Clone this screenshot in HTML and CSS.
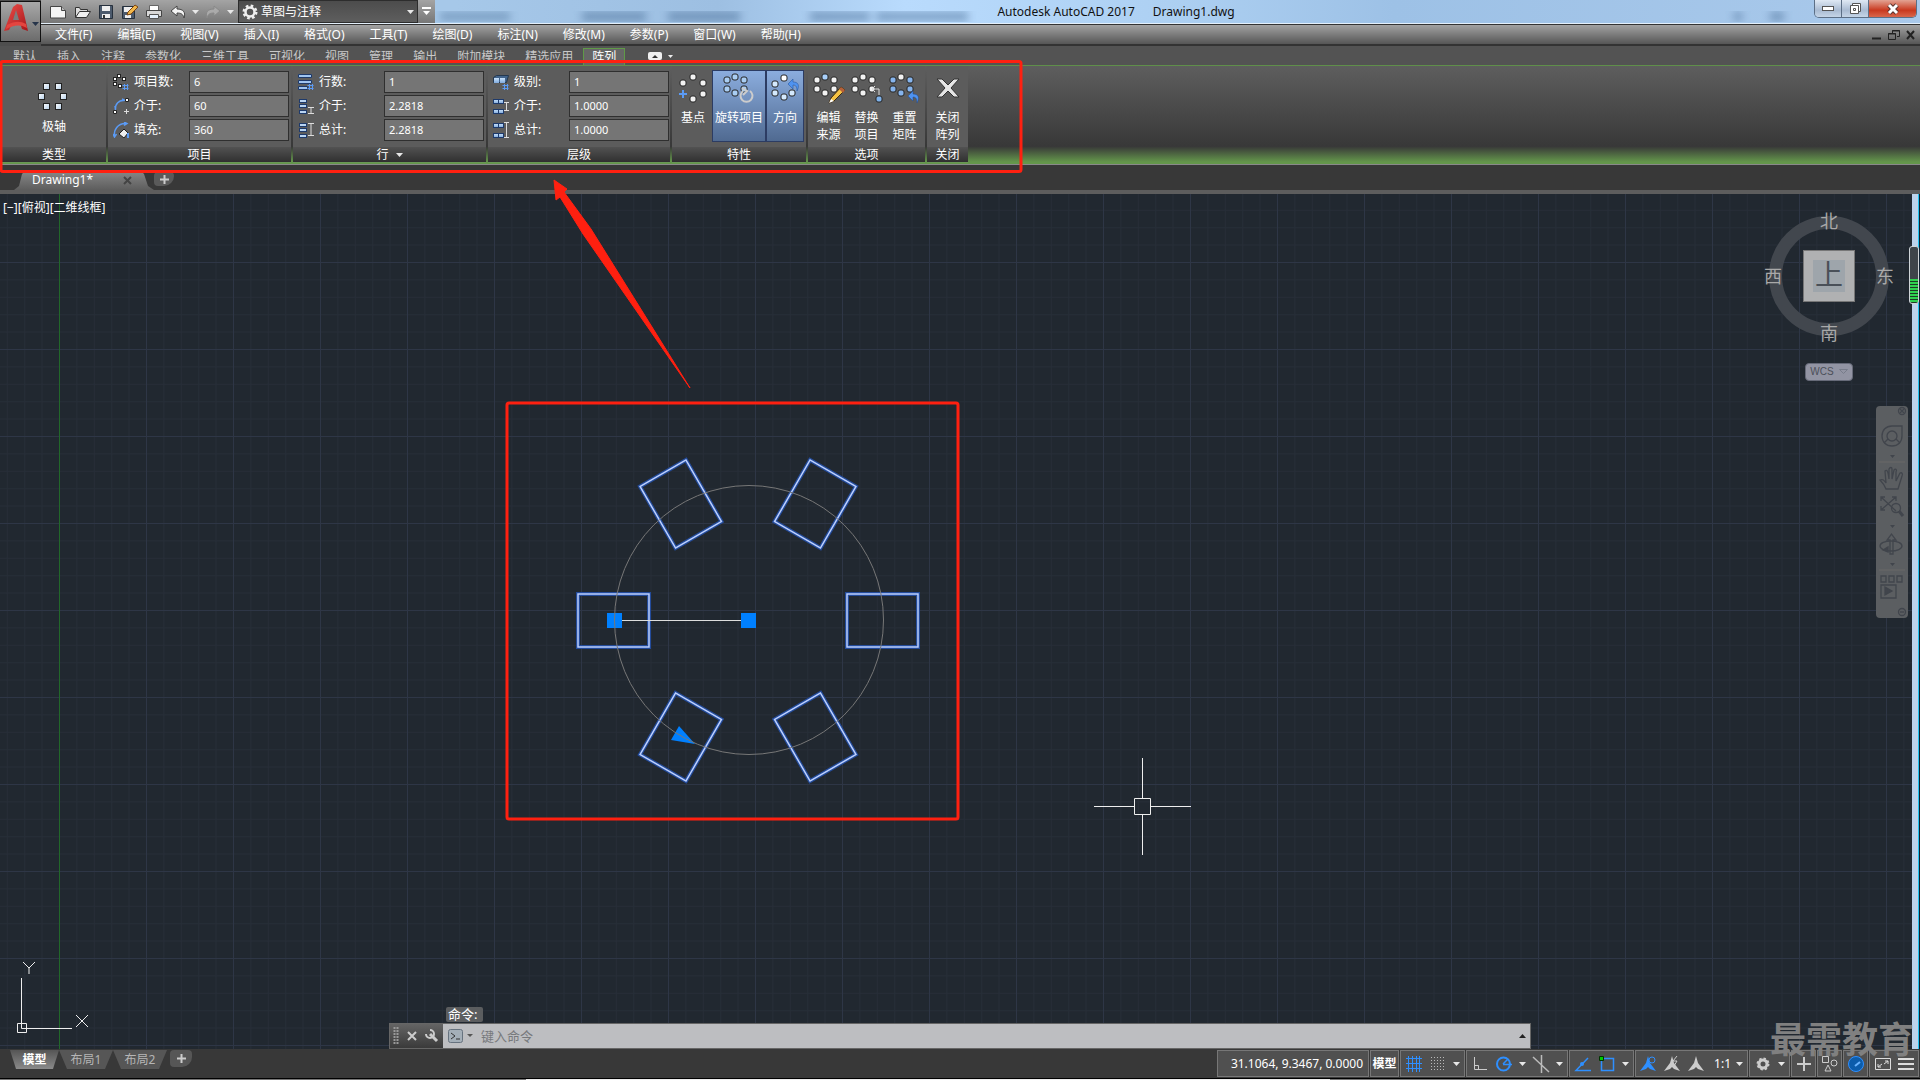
FILE: index.html
```html
<!DOCTYPE html>
<html lang="zh-CN">
<head>
    <meta charset="UTF-8">
    <meta name="viewport" content="width=device-width, initial-scale=1.0">
    <title>Autodesk AutoCAD 2017 - Drawing1.dwg</title>
    <link rel="stylesheet" href="styles.css">
</head>
<body>
    <!-- общие значки -->
    <svg class="defs" width="0" height="0" aria-hidden="true">
        <defs>
            <linearGradient id="tile" x1="0" y1="0" x2="1" y2="1">
                <stop offset="0" stop-color="#fff"/><stop offset="1" stop-color="#b4cfea"/>
            </linearGradient>
            <linearGradient id="blueTile" x1="0" y1="0" x2="0" y2="1">
                <stop offset="0" stop-color="#c9e2fb"/><stop offset="1" stop-color="#7fa9dc"/>
            </linearGradient>
            <linearGradient id="logoRed" x1="0" y1="0" x2="1" y2="1">
                <stop offset="0" stop-color="#f0504a"/><stop offset="1" stop-color="#a3151a"/>
            </linearGradient>
            <rect id="dot" x="-3" y="-3" width="6" height="6" rx="2" stroke="#262626"/>
            <g id="ring">
                <use href="#dot" x="4" y="8"/><use href="#dot" x="21" y="8"/>
                <use href="#dot" x="21" y="17"/><use href="#dot" x="12" y="21"/><use href="#dot" x="4" y="17"/>
            </g>
            <path id="hash" d="M11.500 10v6M14.500 10v6M9.500 11.500h6M9.500 14.500h6" stroke="#5b9bf5" fill="none"/>
            <g id="bars" fill="#b9d4f2" stroke="#1e3a6b">
                <rect x="1.500" y="1.500" width="7" height="3"/><rect x="1.500" y="6.500" width="7" height="3"/><rect x="1.500" y="12.500" width="7" height="3"/>
            </g>
            <g id="pairs" fill="url(#blueTile)" stroke="#1e3a6b">
                <rect x=".5" y="1.500" width="5" height="4"/><rect x="5.500" y="1.500" width="5" height="4"/>
                <rect x=".5" y="11.500" width="5" height="4"/><rect x="5.500" y="11.500" width="5" height="4"/>
            </g>
            <path id="undoBlue" d="M0 5l5-5v3c5 0 7 3 4 9 0-4-1-6-4-6v4z" fill="#4f93f0" stroke="#1f4d94" stroke-width=".5"/>
            <path id="down" d="M0 0h7l-3.500 4z" fill="#e8e8e8"/>
            <path id="man" d="M8 0l2 7 6 8-6-2-2-2-2 2-6 2 6-8z"/>
        </defs>
    </svg>

    <header class="top">
        <button class="app-btn" aria-label="应用程序菜单">
            <svg width="36" height="36" viewBox="0 0 36 36">
                <path d="M1 27L10 3l4-3 5 1 6 26-6-2-2-6-8 1-3 6z" fill="url(#logoRed)"/>
                <path d="M10 16l3-10 3 10z" fill="#7d7d7d"/>
                <path d="M4 21c8-4 13-4 19-1l1 4c-7-4-13-3-21 1z" fill="#e4453f"/>
                <path d="M29 18h7l-3.500 4z" fill="#26344a"/>
            </svg>
        </button>
        <div class="top-rows">
            <div class="title-bar">
                <svg class="aero" width="100%" height="24" aria-hidden="true">
                    <filter id="soft"><feGaussianBlur stdDeviation="4"/></filter>
                    <g fill="#41658e" opacity=".5" filter="url(#soft)">
                        <rect x="440" y="13" width="70" height="7"/><rect x="582" y="12" width="64" height="9"/><rect x="668" y="12" width="72" height="9"/>
                        <rect x="810" y="12" width="60" height="9"/><rect x="876" y="12" width="92" height="9"/>
                        <rect x="1734" y="12" width="8" height="9"/><rect x="1770" y="12" width="14" height="9"/>
                    </g>
                </svg>
                <div class="qat">
                    <button aria-label="新建"><svg width="18" height="16"><path d="M1.500 2.500h11l4 4v7.500h-15z" fill="#f4f4f4" stroke="#444"/><path d="M12.500 2.500v4h4" fill="#bbb" stroke="#444"/></svg></button>
                    <button aria-label="打开"><svg width="18" height="16"><path d="M2.500 13.500v-10h4l1 2h7v3" fill="#ddd" stroke="#333"/><path d="M2.500 13.500l4-6h11l-4 6z" fill="#f0f0f0" stroke="#333"/></svg></button>
                    <button aria-label="保存"><svg width="18" height="16"><path d="M2.500 1.500h13v13h-13z" fill="#4c5a6c" stroke="#26303c"/><path d="M5 2h8v5H5zM5 10h8v4H5z" fill="#eee"/><path d="M6 11h2v3H6z" fill="#333"/></svg></button>
                    <button aria-label="另存为"><svg width="18" height="16"><path d="M1.500 2.500h12v12h-12z" fill="#4c5a6c" stroke="#26303c"/><path d="M3 3h9v5H3zM4 11h6v3H4z" fill="#eee"/><path d="M6 11l1-3 7-7 3 2-7 7z" fill="#f2b84b" stroke="#7c4411"/></svg></button>
                    <button aria-label="打印"><svg width="18" height="16"><path d="M4.500 1.500h9v5h-9z" fill="#fff" stroke="#666"/><path d="M1.500 6.500h15v6h-15z" fill="#d8d8d8" stroke="#444"/><path d="M4.500 10.500h9v4h-9z" fill="#e6f0fb" stroke="#555"/></svg></button>
                    <button aria-label="放弃"><svg width="18" height="16"><path d="M2 7l6-5v3c6 0 9 3 7 9-1-4-3-5-7-5v3z" fill="#f4f4f4" stroke="#444"/></svg></button>
                    <button class="tiny" aria-label="放弃列表"><svg width="7" height="4"><use href="#down"/></svg></button>
                    <button aria-label="重做"><svg width="18" height="16"><path d="M16 7l-6-5v3c-6 0-9 3-7 9 1-4 3-5 7-5v3z" fill="#aaa" stroke="#888"/></svg></button>
                    <button class="tiny" aria-label="重做列表"><svg width="7" height="4"><use href="#down"/></svg></button>
                </div>
                <div class="workspace">
                    <svg width="16" height="16" viewBox="0 0 16 16"><circle cx="8" cy="8" r="6" fill="none" stroke="#eee" stroke-width="3" stroke-dasharray="2.500 2.200"/><circle cx="8" cy="8" r="4.500" fill="none" stroke="#eee" stroke-width="2.500"/></svg>
                    <select aria-label="工作空间"><option>草图与注释</option></select>
                    <svg width="7" height="4"><use href="#down"/></svg>
                </div>
                <button class="customize" aria-label="自定义"><svg width="9" height="9"><path d="M0 1h9" stroke="#fff" stroke-width="2"/><path d="M1 4h7l-3.500 4z" fill="#fff"/></svg></button>
                <div class="app-title"><span>Autodesk AutoCAD 2017</span><span>Drawing1.dwg</span></div>
                <div class="win-btns">
                    <button class="min" aria-label="最小化"><svg width="12" height="6"><rect x=".5" y=".5" width="11" height="4" fill="#fff" stroke="#555"/></svg></button>
                    <button class="max" aria-label="还原"><svg width="13" height="13"><path d="M3.500 1.500h8v8h-8z" fill="#fff" stroke="#555"/><path d="M1.500 3.500h8v8h-8z" fill="#fff" stroke="#555"/><path d="M4.500 6.500h2v2h-2z" stroke="#555" fill="none"/></svg></button>
                    <button class="close" aria-label="关闭"><svg width="14" height="12"><path d="M3 2l8 8M11 2l-8 8" stroke="#5b3530" stroke-width="5"/><path d="M3 2l8 8M11 2l-8 8" stroke="#fff" stroke-width="3"/></svg></button>
                </div>
            </div>
            <nav class="menu-bar">
                <a href="#">文件(F)</a><a href="#">编辑(E)</a><a href="#">视图(V)</a><a href="#">插入(I)</a><a href="#">格式(O)</a><a href="#">工具(T)</a><a href="#">绘图(D)</a><a href="#">标注(N)</a><a href="#">修改(M)</a><a href="#">参数(P)</a><a href="#">窗口(W)</a><a href="#">帮助(H)</a>
                <div class="doc-btns">
                    <button aria-label="最小化文档"><svg width="12" height="12"><path d="M1 9.500h9" stroke="#222" stroke-width="2"/></svg></button>
                    <button aria-label="还原文档"><svg width="12" height="12"><path d="M4.500 4V1.500h7v6H9M.5 4.500h7v6h-7zM4 2h8M0 5h8" fill="none" stroke="#222"/></svg></button>
                    <button aria-label="关闭文档"><svg width="12" height="12"><path d="M2 2l7 8M9 2l-7 8" stroke="#222" stroke-width="2"/></svg></button>
                </div>
            </nav>
        </div>
    </header>

    <nav class="ribbon-tabs">
        <a href="#">默认</a><a href="#">插入</a><a href="#">注释</a><a href="#">参数化</a><a href="#">三维工具</a><a href="#">可视化</a><a href="#">视图</a><a href="#">管理</a><a href="#">输出</a><a href="#">附加模块</a><a href="#">精选应用</a><a href="#" class="active">阵列</a>
        <button class="fold" aria-label="最小化功能区"><svg width="26" height="9"><rect x="0" y="0" width="14" height="8" rx="2" fill="#f0f0f0"/><path d="M4 6l3-3 3 3z" fill="#333"/><path d="M20 3h5l-2.500 3z" fill="#eee"/></svg></button>
    </nav>

    <section class="ribbon">
        <div class="panel type">
            <div class="panel-body">
                <button class="tool">
                    <svg width="32" height="30" viewBox="0 0 32 30">
                        <g fill="url(#tile)" stroke="#222">
                            <rect x="5.500" y=".5" width="6" height="6"/><rect x="17.500" y=".5" width="6" height="6"/>
                            <rect x=".5" y="10.500" width="6" height="6"/><rect x="22.500" y="10.500" width="6" height="6"/>
                            <rect x="5.500" y="20.500" width="6" height="6"/><rect x="17.500" y="20.500" width="6" height="6"/>
                        </g>
                    </svg>
                    <span>极轴</span>
                </button>
            </div>
            <h2>类型</h2>
        </div>
        <div class="panel items">
            <div class="panel-body fields">
                <svg width="16" height="16"><g fill="#fff" stroke="#222"><rect x="4.500" y=".5" width="3" height="3"/><rect x=".5" y="3.500" width="3" height="3"/><rect x="9.500" y="3.500" width="3" height="3"/><rect x=".5" y="8.500" width="3" height="3"/><rect x="5.500" y="10.500" width="3" height="3"/></g><use href="#hash"/></svg>
                <label for="count">项目数:</label><input id="count" type="text" value="6">
                <svg width="16" height="16"><path d="M2.500 11C2 6 6 2 11 2.500M2 8l.5 4M9 1l3 1.500" fill="none" stroke="#5b9bf5" stroke-width="1.500"/><path d="M.5 12.500h3v3h-3zM12.500.5h3v3h-3z" fill="#fff" stroke="#222"/><path d="M13.500 11v5M11 13.500h5" stroke="#ddd"/></svg>
                <label for="between">介于:</label><input id="between" type="text" value="60">
                <svg width="16" height="16"><path d="M1.500 15C0 8 5 1 13 1.500M0 12l1.500 3 2-3M11 0l3 1.500-3 2" fill="none" stroke="#5b9bf5" stroke-width="1.500"/><path d="M6 12l5-5 4 4-4 5z" fill="#eee" stroke="#222"/><path d="M15 11v5" stroke="#5b9bf5" stroke-width="2"/></svg>
                <label for="fill">填充:</label><input id="fill" type="text" value="360">
            </div>
            <h2>项目</h2>
        </div>
        <div class="panel rows">
            <div class="panel-body fields">
                <svg width="16" height="16"><g fill="#9fc4f0" stroke="#1e3a6b"><path d="M.5.5h13v3H.5zM.5 6.500h13v3H.5zM.5 12.500h9v3H.5z"/></g><use href="#hash"/></svg>
                <label for="rowCount">行数:</label><input id="rowCount" type="text" value="1">
                <svg width="16" height="16"><use href="#bars"/><path d="M10 9.500h6M10 15.500h6M13 9v6" stroke="#ddd"/></svg>
                <label for="rowBetween">介于:</label><input id="rowBetween" type="text" value="2.2818">
                <svg width="16" height="16"><use href="#bars"/><path d="M10 1.500h6M10 13.500h6M13 2v11" stroke="#ddd"/></svg>
                <label for="rowTotal">总计:</label><input id="rowTotal" type="text" value="2.2818">
            </div>
            <h2>行 <svg width="7" height="4"><use href="#down"/></svg></h2>
        </div>
        <div class="panel levels">
            <div class="panel-body fields">
                <svg width="16" height="16"><path d="M.5 3.500l3-2h12l-2 7H.5z" fill="#42648c" stroke="#24384f"/><path d="M1 4h5v5H1zM7 4h5v5H7z" fill="url(#blueTile)"/><use href="#hash"/></svg>
                <label for="lvlCount">级别:</label><input id="lvlCount" type="text" value="1">
                <svg width="16" height="16"><use href="#pairs"/><path d="M11 4.500h5M11 12.500h5M13.500 5v7" stroke="#ddd"/></svg>
                <label for="lvlBetween">介于:</label><input id="lvlBetween" type="text" value="1.0000">
                <svg width="16" height="16"><use href="#pairs"/><path d="M11 .5h5M11 15.500h5M13.500 1v14" stroke="#ddd"/></svg>
                <label for="lvlTotal">总计:</label><input id="lvlTotal" type="text" value="1.0000">
            </div>
            <h2>层级</h2>
        </div>
        <div class="panel props">
            <div class="panel-body tools">
                <button class="tool"><svg width="32" height="32"><g fill="#f2f2f2"><use href="#dot" x="6" y="11"/><use href="#dot" x="16" y="5"/><use href="#dot" x="26" y="11"/><use href="#dot" x="26" y="22"/><use href="#dot" x="16" y="27"/></g><path d="M6 18v8M2 22h8" stroke="#5b9bf5" stroke-width="2"/></svg><span>基点</span></button>
                <button class="tool wide pressed"><svg width="32" height="32"><g fill="#a9cdf2"><use href="#ring"/><use href="#dot" x="12" y="5"/></g><path d="M20 19a6 6 0 1 0 7 0M19 16l5 3-4 4" fill="none" stroke="#ccc" stroke-width="2"/></svg><span>旋转项目</span></button>
                <button class="tool pressed"><svg width="32" height="32"><g fill="#d4e9fd"><use href="#dot" x="6" y="12"/><use href="#dot" x="6" y="21"/><use href="#dot" x="15" y="25"/><use href="#dot" x="23" y="21"/><use href="#dot" x="15" y="6" fill="#fff"/></g><use href="#undoBlue" x="19" y="7"/></svg><span>方向</span></button>
            </div>
            <h2>特性</h2>
        </div>
        <div class="panel options">
            <div class="panel-body tools">
                <button class="tool"><svg width="32" height="32"><g fill="#f2f2f2"><use href="#ring"/><use href="#dot" x="12" y="5" fill="#a9d0fa"/></g><path d="M16 31l2-5L28 15l4 3-11 11z" fill="#f5c243" stroke="#3b2a12"/><path d="M26 17l2-2 4 3-2 3z" fill="#b5603a"/><path d="M18 27l3 2-5 2z" fill="#fff"/></svg><span>编辑<br>来源</span></button>
                <button class="tool"><svg width="32" height="32"><g fill="#f2f2f2"><use href="#ring"/><use href="#dot" x="12" y="5"/></g><path d="M21 17h7v6M24 14l-3 3 3 3" fill="none" stroke="#ddd"/><use href="#dot" x="28" y="27" fill="#7fb2ea"/></svg><span>替换<br>项目</span></button>
                <button class="tool"><svg width="32" height="32"><g fill="#86b4ec"><use href="#ring"/><use href="#dot" x="12" y="5" fill="#f2f2f2"/></g><use href="#undoBlue" x="19" y="19"/></svg><span>重置<br>矩阵</span></button>
            </div>
            <h2>选项</h2>
        </div>
        <div class="panel shut">
            <div class="panel-body tools">
                <button class="tool"><svg width="32" height="32"><path d="M5 7h5l6 6 6-6h5l-8 9 8 9h-5l-6-6-6 6H5l8-9z" fill="#e6e6e6" stroke="#333"/></svg><span>关闭<br>阵列</span></button>
            </div>
            <h2>关闭</h2>
        </div>
    </section>

    <div class="doc-tabs">
        <div class="doc-tab"><span>Drawing1*</span><button aria-label="关闭图形"><svg width="9" height="9"><path d="M1 1l7 7M8 1l-7 7" stroke="#444" stroke-width="2"/></svg></button></div>
        <button class="add-tab" aria-label="新图形"><svg width="9" height="9"><path d="M4.500 0v9M0 4.500h9" stroke="#ccc" stroke-width="2"/></svg></button>
    </div>

    <main class="workarea">
        <div class="viewport">
            <svg class="drawing" width="100%" height="100%">
                <defs>
                    <pattern id="grid" x="59" y="68" width="87" height="87" patternUnits="userSpaceOnUse">
                        <path d="M17.900 0v87M35.300 0v87M52.700 0v87M70.100 0v87M0 17.900h87M0 35.300h87M0 52.700h87M0 70.100h87" stroke="#262d37"/>
                        <path d="M.5 0v87M0 .5h87" stroke="#2e3646"/>
                    </pattern>
                </defs>
                <rect width="100%" height="100%" fill="url(#grid)"/>
                <path d="M59.500 0v2000" stroke="#22682a"/>
                <g transform="translate(749 426)" fill="none">
                    <g transform="translate(-1 .5)">
                        <g id="item"><rect x="-170" y="-26.500" width="71" height="53" stroke="#234b9b" stroke-width="4"/><rect x="-170" y="-26.500" width="71" height="53" stroke="#bcd0ff" stroke-width="1.500"/></g>
                        <use href="#item" transform="rotate(60)"/><use href="#item" transform="rotate(120)"/><use href="#item" transform="rotate(180)"/><use href="#item" transform="rotate(240)"/><use href="#item" transform="rotate(300)"/>
                    </g>
                    <path d="M-127 .5h120" stroke="#ddd"/>
                    <path d="M-142-7h15v15h-15zM-8-7h15v15H-8z" fill="#0080ff"/>
                    <path d="M-70 106l16 18-24-4z" fill="#0080ff"/>
                    <circle r="134.500" stroke="#777"/>
                </g>
                <path d="M1094 612.500h40M1151 612.500h40M1142.500 564v40M1142.500 621v40M1134.500 604.500h16v16h-16z" stroke="#eee" fill="none"/>
            </svg>
            <div class="view-label"><a href="#">[−]</a><a href="#">[俯视]</a><a href="#">[二维线框]</a></div>
            <svg class="ucs" width="90" height="80" viewBox="0 0 90 80" fill="none" stroke="#eee">
                <path d="M21.500 18v50.500H72M17.500 63.500h9v9h-9z"/>
                <path d="M23 2l6 6 6-6M29 8v6M76 55l12 12M88 55l-12 12"/>
            </svg>
            <div class="viewcube">
                <button class="n">北</button><button class="w">西</button>
                <button class="face">上</button>
                <button class="e">东</button><button class="s">南</button>
            </div>
            <button class="wcs">WCS <svg width="9" height="6"><path d="M.5.5h8l-4 4z" fill="none" stroke="#777c8a"/></svg></button>
            <div class="navbar">
                <svg width="32" height="212" viewBox="0 0 32 212" fill="none" stroke="#41454c" stroke-width="1.300">
                    <circle cx="26" cy="5" r="3.500"/><path d="M24 3l4 4M28 3l-4 4"/>
                    <path d="M6 30c0-6 4-10 10-10h10v10c0 6-4 10-10 10S6 36 6 30z"/><circle cx="16" cy="30" r="5"/><path d="M8 37l4-4M24 37l-4-4"/>
                    <path d="M14 49h5l-2.500 3zM14 119h5l-2.500 3zM14 157h5l-2.500 3z" fill="#41454c" stroke="none"/>
                    <path d="M3 56h26M3 164h26" stroke="#666"/>
                    <path d="M10 83c-2-5-4-7-6-9 3-1 4 0 6 3l-1-12c2-2 3 0 4 8V63c1-2 3-2 3 0v10l2-9c2-2 3 0 2 2v9l4-8c2-1 3 1 2 3l-4 13z"/>
                    <path d="M5 91l15 14M20 91L5 104M5 95v-4h4M16 91h4v4M5 100v4h4"/><circle cx="20" cy="102" r="4.500"/><path d="M23 105l4 5" stroke-width="3"/>
                    <path d="M14 148v-14h-3l4.500-6 4.500 6h-3v14z"/><ellipse cx="15" cy="140" rx="11" ry="5"/><path d="M7 144l5-3v5z" fill="#41454c"/>
                    <path d="M5 170h5v6H5zM13 170h5v6h-5zM21 170h5v6h-5zM5 179h15v13H5z"/><path d="M9 181l7 4-7 4z" fill="#41454c"/>
                    <circle cx="26" cy="206" r="3.500"/><path d="M24 206h4"/>
                </svg>
            </div>
            <div class="command">
                <div class="history">命令:</div>
                <div class="command-line">
                    <div class="handle">
                        <svg width="6" height="18"><path d="M1.500 0v18M4.500 0v18" stroke="#999" stroke-width="2" stroke-dasharray="2 1"/></svg>
                        <button aria-label="关闭命令行"><svg width="10" height="10"><path d="M1 1l8 8M9 1l-8 8" stroke="#ccc" stroke-width="2"/></svg></button>
                        <button aria-label="自定义命令行"><svg width="14" height="14"><path d="M5 5l7 7" stroke="#ccc" stroke-width="3"/><path d="M5 1a4 4 0 1 1-4 4" fill="none" stroke="#ccc" stroke-width="2"/></svg></button>
                    </div>
                    <button class="prompt" aria-label="最近使用的命令"><svg width="26" height="16"><rect x=".5" y="1.500" width="14" height="13" rx="2" fill="#a4afb8" stroke="#66727e"/><path d="M3 5l4 3-4 3M8 11h4" fill="none" stroke="#333"/><path d="M19 6h6l-3 3z" fill="#555"/></svg></button>
                    <input type="text" placeholder="键入命令" aria-label="命令">
                    <button class="up" aria-label="历史"><svg width="7" height="4"><path d="M0 4h7L3.500 0z" fill="#222"/></svg></button>
                </div>
            </div>
        </div>
        <div class="side"><div class="meter"></div></div>
    </main>

    <footer class="status">
        <div class="layouts">
            <button class="layout active">模型</button><button class="layout">布局1</button><button class="layout">布局2</button>
            <button class="layout plus" aria-label="新建布局"><svg width="9" height="9"><path d="M4.500 0v9M0 4.500h9" stroke="#ccc" stroke-width="2"/></svg></button>
        </div>
        <div class="status-right">
            <div class="cell coords">31.1064, 9.3467, 0.0000</div>
            <button class="cell model">模型</button>
            <div class="cell">
                <button aria-label="栅格"><svg width="18" height="18"><path d="M3.500 1v16M7.500 1v16M11.500 1v16M14.500 1v16M1 3.500h16M1 8.500h16M1 13.500h16" stroke="#2e8fff"/></svg></button>
                <button aria-label="捕捉"><svg width="18" height="18"><path d="M2 2.500h14M2 5.500h14M2 8.500h14M2 11.500h14M2 14.500h14" stroke="#bbb" stroke-dasharray="1 2"/></svg></button>
                <button class="drop" aria-label="捕捉设置"><svg width="7" height="4"><use href="#down"/></svg></button>
            </div>
            <div class="cell">
                <button aria-label="正交"><svg width="18" height="18"><path d="M3.500 2v12.500H16M3.500 10.500h4v4" fill="none" stroke="#ccc"/></svg></button>
                <button aria-label="极轴追踪"><svg width="18" height="18"><circle cx="8.500" cy="9" r="6.500" fill="none" stroke="#2e8fff" stroke-width="2"/><path d="M8 9.500h9M8 9l5-5" stroke="#2e8fff" stroke-width="1.500"/></svg></button>
                <button class="drop" aria-label="极轴设置"><svg width="7" height="4"><use href="#down"/></svg></button>
                <button aria-label="等轴测"><svg width="18" height="18"><path d="M1 2l16 15M9.500 0v18" stroke="#bbb" stroke-width="1.500"/></svg></button>
                <button class="drop" aria-label="等轴测设置"><svg width="7" height="4"><use href="#down"/></svg></button>
            </div>
            <div class="cell">
                <button aria-label="对象捕捉追踪"><svg width="18" height="18"><path d="M14 3L2 15.500h15" fill="none" stroke="#2e8fff" stroke-width="1.500"/><circle cx="8" cy="9" r="2" fill="#2e8fff"/></svg></button>
                <button aria-label="对象捕捉"><svg width="18" height="18"><path d="M3.500 3.500h12v12h-12z" fill="none" stroke="#2e8fff" stroke-width="1.500"/><path d="M1.500 1.500h4v4h-4z" fill="#0c0" stroke="#030"/></svg></button>
                <button class="drop" aria-label="捕捉模式"><svg width="7" height="4"><use href="#down"/></svg></button>
            </div>
            <div class="cell">
                <button aria-label="注释可见性"><svg width="18" height="18" fill="#2e8fff"><use href="#man" x="0" y="1"/><circle cx="12" cy="5" r="3" fill="#505050" stroke="#2e8fff"/></svg></button>
                <button aria-label="自动缩放"><svg width="18" height="18" fill="#ccc"><use href="#man" x="0" y="1"/><path d="M13 1l-4 5h4l-3 5" fill="none" stroke="#ccc"/></svg></button>
                <button aria-label="注释比例"><svg width="18" height="18" fill="#ccc"><use href="#man" x="0" y="1"/></svg></button>
                <button class="scale">1:1 <svg width="7" height="4"><use href="#down"/></svg></button>
            </div>
            <div class="cell">
                <button aria-label="切换工作空间"><svg width="18" height="18"><circle cx="9" cy="9" r="4" fill="none" stroke="#ccc" stroke-width="3"/><circle cx="9" cy="9" r="5.500" fill="none" stroke="#ccc" stroke-width="2" stroke-dasharray="2.300 2"/></svg></button>
                <button class="drop" aria-label="工作空间列表"><svg width="7" height="4"><use href="#down"/></svg></button>
            </div>
            <button class="cell one" aria-label="注释监视器"><svg width="18" height="18"><path d="M9 2v14M2 9h14" stroke="#ccc" stroke-width="2"/></svg></button>
            <button class="cell one" aria-label="隔离对象"><svg width="18" height="18"><path d="M1.500 1.500h6v6h-6zM4 16l3-6 3 6z" fill="none" stroke="#ccc"/><circle cx="13" cy="8" r="3" fill="none" stroke="#ccc"/></svg></button>
            <button class="cell one" aria-label="硬件加速"><svg width="18" height="18"><circle cx="9" cy="9" r="7.500" fill="#0b5cab" stroke="#2e8fff"/><path d="M8 11l5-4" stroke="#6ab4ff" stroke-width="2"/></svg></button>
            <div class="cell last">
                <button aria-label="全屏显示"><svg width="18" height="18"><path d="M1.500 3.500h15v11h-15zM4 12l4-3M4 9v3h3M14 6l-4 3M14 9V6h-3" fill="none" stroke="#ddd"/></svg></button>
                <button aria-label="自定义"><svg width="16" height="18"><path d="M0 4h16M0 9h16M0 14h16" stroke="#ddd" stroke-width="2"/></svg></button>
            </div>
        </div>
    </footer>
    <div class="taskbar-edge"></div>

    <!-- красные пометки поверх окна -->
    <svg class="notes" width="1030" height="830" fill="none" stroke="#ff2010" stroke-width="3">
        <rect x="1" y="61.500" width="1020" height="110" rx="2"/>
        <rect x="507" y="403" width="451" height="416" rx="2"/>
        <path d="M554 180l13 9-3 3 27 37 99 159-107-154-23-37-4 3z" fill="#ff2010" stroke="#ff2010" stroke-width="1"/>
    </svg>
    <div class="watermark">最需教育</div>
</body>
</html>
```

FILE: styles.css
```css
* {
    box-sizing: border-box;
}

body {
    margin: 0;
    height: 100vh;
    display: flex;
    flex-direction: column;
    position: relative;
    overflow: hidden;
    background: #383838;
    color: #fff;
    font-family: "Noto Sans", "Noto Sans CJK SC", sans-serif;
    font-size: 12px;
    line-height: 16px;
}

button {
    background: none;
    border: none;
    padding: 0;
    margin: 0;
    color: inherit;
    font: inherit;
    white-space: nowrap;
    display: flex;
    align-items: center;
    justify-content: center;
}

a {
    color: inherit;
    text-decoration: none;
}

svg {
    display: block;
    flex: none;
}

.defs {
    position: absolute;
}

/* title + menu */
.top {
    display: flex;
    height: 46px;
    flex: none;
    background: #4e4e4e;
}

.app-btn {
    width: 41px;
    height: 41px;
    margin-top: 1px;
    border: 1px solid #111;
    background: linear-gradient(#a8a8a8, #6c6c6c);
}

.top-rows {
    flex: 1;
    display: flex;
    flex-direction: column;
}

.title-bar {
    height: 24px;
    display: flex;
    position: relative;
    background: linear-gradient(to right, #a6c8e9 22%, #9dbfe2 36%, #b9dbfd 46%, #add0f2 60%, #9dc1e6 72%, #a9c9eb);
    border-bottom: 1px solid #e4f0fb;
}

.aero {
    position: absolute;
    left: -41px;
    top: 0;
}

.qat {
    width: 197px;
    display: flex;
    align-items: center;
    gap: 6px;
    padding-left: 8px;
    background: linear-gradient(#a4a4a4, #777);
    position: relative;
}

.qat .tiny {
    width: 5px;
}

.workspace {
    width: 180px;
    height: 23px;
    display: flex;
    align-items: center;
    gap: 3px;
    padding: 0 3px;
    background: linear-gradient(#4c4c4c, #5e5e5e);
    border: 1px solid #2d2d2d;
    position: relative;
}

.workspace select {
    flex: 1;
    appearance: none;
    background: none;
    border: none;
    padding: 0;
    color: #fff;
    font: inherit;
}

.customize {
    width: 17px;
    background: linear-gradient(#a4a4a4, #777);
    position: relative;
}

.app-title {
    flex: 1;
    display: flex;
    justify-content: center;
    gap: 18px;
    padding-right: 17px;
    padding-top: 4px;
    color: #111;
    position: relative;
}

.win-btns {
    display: flex;
    height: 18px;
    margin-right: 3px;
    border: 1px solid #5c6f86;
    border-top: none;
    border-radius: 0 0 5px 5px;
    overflow: hidden;
    position: relative;
}

.win-btns button {
    width: 27px;
    border-right: 1px solid #5c6f86;
    background: linear-gradient(#dfe9f4, #a9bbd2 60%, #c5d5e7);
}

.win-btns .close {
    width: 47px;
    border-right: none;
    background: linear-gradient(#e3a393, #c9391f 60%, #d9674c);
}

.menu-bar {
    height: 22px;
    display: flex;
    align-items: center;
    gap: 1px;
    padding-left: 2px;
    background: linear-gradient(#a2a2a2, #565656);
    border-top: 1px solid #333;
    border-bottom: 2px solid #333;
}

.menu-bar a {
    padding: 0 12px;
}

.doc-btns {
    margin-left: auto;
    display: flex;
    gap: 5px;
    padding-right: 3px;
}

/* ribbon */
.ribbon-tabs {
    height: 20px;
    flex: none;
    display: flex;
    align-items: flex-end;
    padding-left: 3px;
    background: #535353;
    border-bottom: 1px solid #5f8f4a;
    color: #c8c8c8;
}

.ribbon-tabs a {
    padding: 0 10px;
    height: 16px;
}

.ribbon-tabs .active {
    height: 17px;
    padding: 0 8px;
    border: 1px solid #5f9a47;
    border-bottom: none;
    background: #666;
    color: #fff;
}

.fold {
    margin-left: 23px;
    height: 17px;
}

.ribbon {
    height: 99px;
    flex: none;
    display: flex;
    gap: 2px;
    padding: 0 2px 1px;
    background: linear-gradient(#5e5e5e, #383838 82%, #64974b 98%);
    border-bottom: 1px solid #8a8a8a;
}

.panel {
    display: flex;
    flex-direction: column;
    background: #5c5c5c;
    border-bottom: 1px solid #6a9a55;
}

.panel h2 {
    margin: 0;
    height: 15px;
    flex: none;
    display: flex;
    align-items: center;
    justify-content: center;
    gap: 7px;
    font-size: 12px;
    font-weight: normal;
    background: linear-gradient(#525252, #303030);
}

.panel-body {
    flex: 1;
}

.type { width: 104px; }
.items { width: 183px; }
.rows { width: 193px; }
.levels { width: 182px; }
.props { width: 134px; }
.options { width: 117px; }
.shut { width: 41px; }

.type .tool {
    width: 100%;
    padding-top: 17px;
}

.type .tool svg {
    height: 30px;
}

.fields {
    display: grid;
    grid-template-columns: 16px 50px 100px;
    grid-auto-rows: 22px;
    gap: 2px 5px;
    align-items: center;
    padding: 5px 0 0 5px;
}

.rows .fields {
    grid-template-columns: 16px 60px 100px;
}

.fields label {
    white-space: nowrap;
}

.fields input {
    width: 100px;
    height: 22px;
    padding: 0 4px 2px;
    border: 1px solid #2f2f2f;
    background: #757575;
    color: #fff;
    font-family: inherit;
    font-size: 11px;
}

.tools {
    display: flex;
    justify-content: center;
    padding-top: 4px;
}

.tool {
    width: 38px;
    height: 72px;
    flex-direction: column;
    justify-content: flex-start;
    padding-top: 2px;
    line-height: 17px;
}

.tool span {
    padding-top: 5px;
}

.tool.wide {
    width: 54px;
}

.tool.pressed {
    border: 1px solid #2c3c63;
    padding-top: 1px;
    background: linear-gradient(#8badde, #506a91);
}

/* drawing tabs */
.doc-tabs {
    height: 29px;
    flex: none;
    display: flex;
    align-items: flex-end;
    padding-left: 14px;
    background: #383838;
    border-bottom: 4px solid #5d5d5d;
}

.doc-tab {
    width: 140px;
    height: 20px;
    display: flex;
    align-items: center;
    justify-content: space-between;
    padding: 0 22px 0 18px;
    background: linear-gradient(#8a8a8a, #5d5d5d);
    clip-path: polygon(12px 0, 126px 0, 130px 4px, 134px 16px, 140px 100%, 0 100%, 5px 16px, 8px 4px);
}

.add-tab {
    width: 20px;
    height: 14px;
    margin-bottom: 4px;
    background: #5a5a5a;
    border-radius: 4px 4px 10px 4px;
}

/* canvas */
.workarea {
    flex: 1;
    display: flex;
    min-height: 0;
}

.viewport {
    flex: 1;
    position: relative;
    background: #212830;
    overflow: hidden;
}

.drawing {
    position: absolute;
    inset: 0;
}

.view-label {
    position: absolute;
    left: 3px;
    top: 6px;
}

.ucs {
    position: absolute;
    left: 0;
    bottom: 9px;
}

.viewcube {
    position: absolute;
    right: 23px;
    top: 22px;
    width: 120px;
    height: 120px;
    display: grid;
    place-items: center;
    border: 13px solid #42474e;
    border-radius: 50%;
    color: #a9a9a9;
    font-size: 18px;
    line-height: 20px;
}

.viewcube button {
    position: absolute;
}

.viewcube .n { top: -18px; }
.viewcube .s { bottom: -20px; }
.viewcube .w { left: -18px; }
.viewcube .e { right: -18px; }

.viewcube .face {
    width: 52px;
    height: 52px;
    background: #b0b1b2;
    border: 1px solid #777;
    box-shadow: inset 0 0 0 9px #b0b1b2, inset 0 0 0 30px #9ea5ab;
    color: #4a5058;
    font-family: "Liberation Serif", "Noto Sans CJK SC", serif;
    font-size: 28px;
}

.wcs {
    position: absolute;
    right: 59px;
    top: 169px;
    width: 48px;
    height: 18px;
    gap: 5px;
    border: 1px solid #666a78;
    border-radius: 4px;
    background: #9294a3;
    color: #4c4f58;
    font-family: "Liberation Sans", sans-serif;
    font-size: 10px;
}

.navbar {
    position: absolute;
    right: 4px;
    top: 212px;
    border-radius: 4px;
    background: #5b5e61;
}

.command {
    position: absolute;
    left: 389px;
    right: 381px;
    bottom: 0;
    font-size: 13px;
}

.history {
    width: 37px;
    margin-left: 57px;
    padding-left: 2px;
    height: 15px;
    line-height: 15px;
    margin-bottom: 1px;
    border-radius: 2px;
    background: #5b5d5f;
}

.command-line {
    display: flex;
    height: 26px;
    border: 1px solid #666;
    background: #bdbec1;
}

.handle {
    width: 53px;
    flex: none;
    display: flex;
    align-items: center;
    gap: 8px;
    padding-left: 3px;
    background: linear-gradient(#646464, #3a3a3a);
}

.prompt {
    width: 36px;
}

.command-line input {
    flex: 1;
    border: none;
    padding: 0 2px;
    background: none;
    font: inherit;
    color: #222;
}

.command-line input::placeholder {
    color: #77797c;
    opacity: 1;
}

.up {
    width: 15px;
}

.side {
    width: 8px;
    position: relative;
    background: #bcd3ec;
    border-right: 1px solid #123;
    box-shadow: inset -1px 0 #22c3f0;
}

.meter {
    position: absolute;
    left: -3px;
    top: 52px;
    width: 10px;
    height: 58px;
    border: 1px solid #cfd4d8;
    border-radius: 3px;
    background: repeating-linear-gradient(#2fd14f 0 2px, #1d3a26 2px 3px) bottom / 100% 24px no-repeat, #3e444a;
}

/* status bar */
.status {
    height: 29px;
    flex: none;
    display: flex;
    justify-content: space-between;
    background: #383838;
}

.layouts {
    display: flex;
    height: 19px;
    margin-top: 1px;
    padding-left: 10px;
}

.layout {
    width: 54px;
    color: #b5b5b5;
    background: #565656;
    clip-path: polygon(0 0, 100% 0, 46px 100%, 8px 100%);
}

.layout.active {
    width: 49px;
    color: #fff;
    font-weight: bold;
    background: linear-gradient(#555, #8a8a8a);
    clip-path: polygon(0 0, 100% 0, 43px 100%, 6px 100%);
}

.layout.plus {
    width: 22px;
    margin-left: 3px;
    height: 17px;
    clip-path: none;
    border-radius: 4px 4px 10px 4px;
}

.status-right {
    display: flex;
    gap: 1px;
    padding: 1px 1px 1px 0;
}

.cell {
    display: flex;
    align-items: center;
    gap: 6px;
    padding: 0 4px;
    border: 1px solid #777;
    background: #505050;
}

.coords {
    width: 152px;
    justify-content: flex-end;
    padding-right: 5px;
}

.model {
    width: 29px;
    padding: 0 1px;
    font-weight: bold;
}

.drop {
    width: 7px;
}

.scale {
    gap: 5px;
    padding-left: 2px;
}

.cell.one {
    width: 25px;
    padding: 0;
}

.cell.last {
    gap: 6px;
}

.taskbar-edge {
    height: 2px;
    flex: none;
    border-top: 1px solid #000;
    background: linear-gradient(to right, #777 526px, #eee 526px, #eee 1330px, #777 1330px);
}

.notes {
    position: absolute;
    left: 0;
    top: 0;
    pointer-events: none;
}

.watermark {
    position: absolute;
    right: 6px;
    bottom: 22px;
    color: #808080;
    font-size: 36px;
    font-weight: bold;
    line-height: 36px;
    pointer-events: none;
}
```
